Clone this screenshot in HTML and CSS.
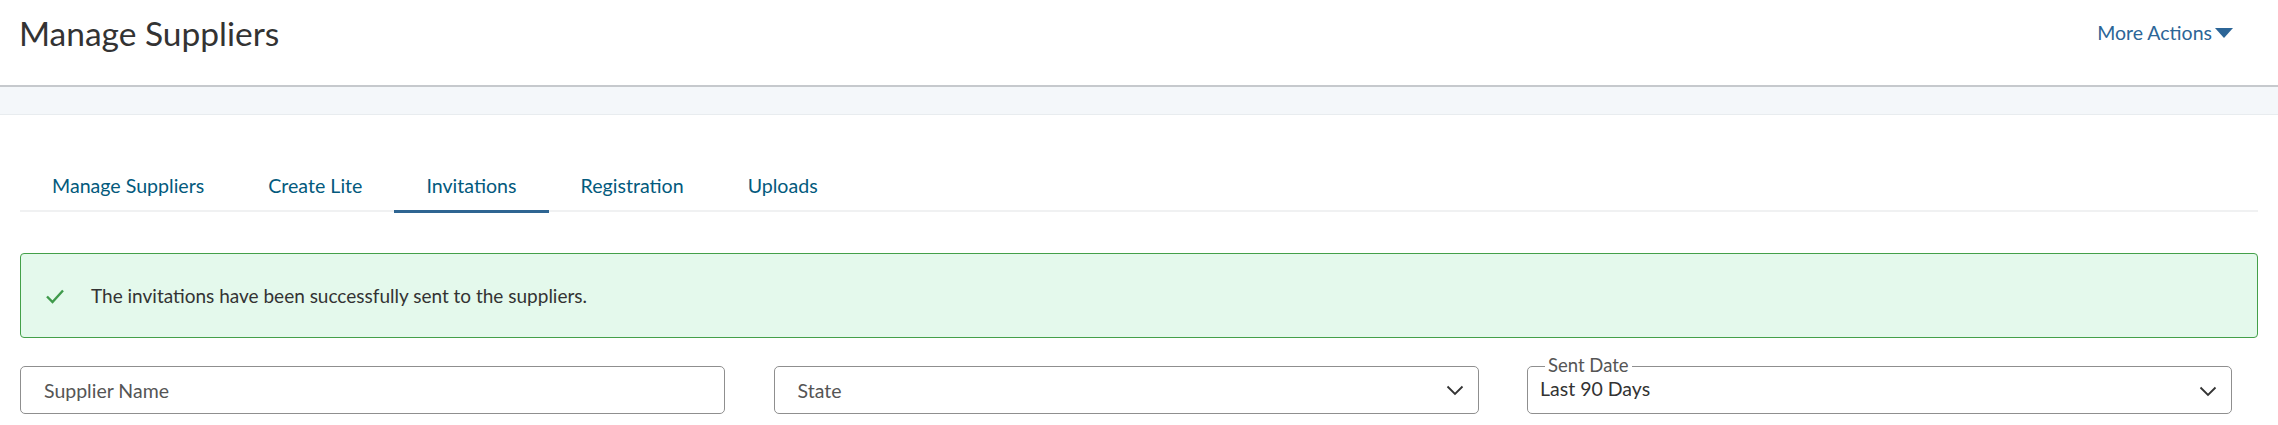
FILE: index.html
```html
<!DOCTYPE html>
<html>
<head>
<meta charset="utf-8">
<link rel="stylesheet" href="styles.css">
</head>
<body>
<header class="page-header">
  <h1 class="page-title">Manage Suppliers</h1>
  <a class="more-actions">More Actions<span class="caret"></span></a>
</header>
<div class="sub-band"></div>
<main class="content">
  <nav class="tabs">
    <a class="tab">Manage Suppliers</a>
    <a class="tab">Create Lite</a>
    <a class="tab active">Invitations</a>
    <a class="tab">Registration</a>
    <a class="tab">Uploads</a>
  </nav>
  <div class="alert">
    <svg class="check" width="20" height="16" viewBox="0 0 20 16"><path d="M2 8.5 L7.5 14 L18 2.5" fill="none" stroke="#3f9a4b" stroke-width="2.4"/></svg>
    <span class="alert-text">The invitations have been successfully sent to the suppliers.</span>
  </div>
  <div class="filters">
    <div class="field"><span class="placeholder">Supplier Name</span></div>
    <div class="field select"><span class="placeholder">State</span>
      <svg class="chev" width="18" height="11" viewBox="0 0 18 11"><path d="M1.5 1.5 L9 9 L16.5 1.5" fill="none" stroke="#333" stroke-width="1.8"/></svg>
    </div>
    <fieldset class="field select outlined"><legend>Sent Date</legend><span class="value">Last 90 Days</span>
      <svg class="chev" width="18" height="11" viewBox="0 0 18 11"><path d="M1.5 1.5 L9 9 L16.5 1.5" fill="none" stroke="#333" stroke-width="1.8"/></svg>
    </fieldset>
  </div>
</main>
</body>
</html>
```
FILE: styles.css
```css
* { box-sizing: border-box; }
body {
  margin: 0;
  font-family: "Lato", "Open Sans", sans-serif;
  color: #333;
  background: #fff;
}
.page-header {
  height: 87px;
  display: flex;
  align-items: flex-start;
  justify-content: space-between;
  padding: 12px 45px 0 19px;
  border-bottom: 2px solid #c6c9cd;
  box-shadow: 0 1px 2px rgba(0,0,0,0.12);
}
.page-title {
  margin: 0;
  font-size: 33.5px;
  font-weight: 400;
  color: #333;
  line-height: 42px;
}
.more-actions {
  display: flex;
  align-items: center;
  font-size: 19.5px;
  color: #2c6597;
  line-height: 40px;
  margin-top: 1px;
}
.caret {
  display: inline-block;
  width: 0; height: 0;
  margin-left: 3px;
  border-left: 9px solid transparent;
  border-right: 9px solid transparent;
  border-top: 10px solid #2c6597;
}
.sub-band {
  height: 28px;
  background: #f4f7fa;
  border-bottom: 1px solid #e8ecef;
}
.content {
  padding: 48px 20px 0 20px;
}
.tabs {
  display: flex;
  border-bottom: 2px solid #f0f1f2;
  height: 49px;
}
.tab {
  padding: 6px 32px 0;
  font-size: 19.6px;
  color: #035a7d;
  line-height: 34px;
  height: 49px;
}
.tab.active {
  border-bottom: 3px solid #2e6592;
  height: 50px;
}
.alert {
  margin-top: 41px;
  height: 85px;
  display: flex;
  align-items: center;
  padding-left: 24px;
  background: #e4f9ec;
  border: 1.5px solid #43a049;
  border-radius: 4px;
}
.check { margin-right: 26px; }
.alert-text {
  font-size: 19px;
  color: #333;
}
.filters {
  margin-top: 28px;
  display: grid;
  grid-template-columns: repeat(3, 705px);
  column-gap: 48.5px;
}
.field {
  position: relative;
  height: 48px;
  border: 1px solid #8f8f8f;
  border-radius: 5px;
  display: flex;
  align-items: center;
  justify-content: space-between;
  padding: 0 17px 0 23px;
  margin: 0;
}
.placeholder { font-size: 19.5px; color: #555; }
.field.select { padding-right: 14px; }
.outlined {
  padding: 0 14px 0 12px;
  min-width: 0;
}
.outlined legend {
  position: absolute;
  top: -13px;
  left: 17px;
  padding: 0 3px;
  background: #fff;
  font-size: 18.5px;
  color: #555;
  line-height: 22px;
}
.outlined .value {
  font-size: 19.5px;
  color: #333;
  margin-top: -3px;
}
.outlined .chev { margin-top: 2px; }
```
